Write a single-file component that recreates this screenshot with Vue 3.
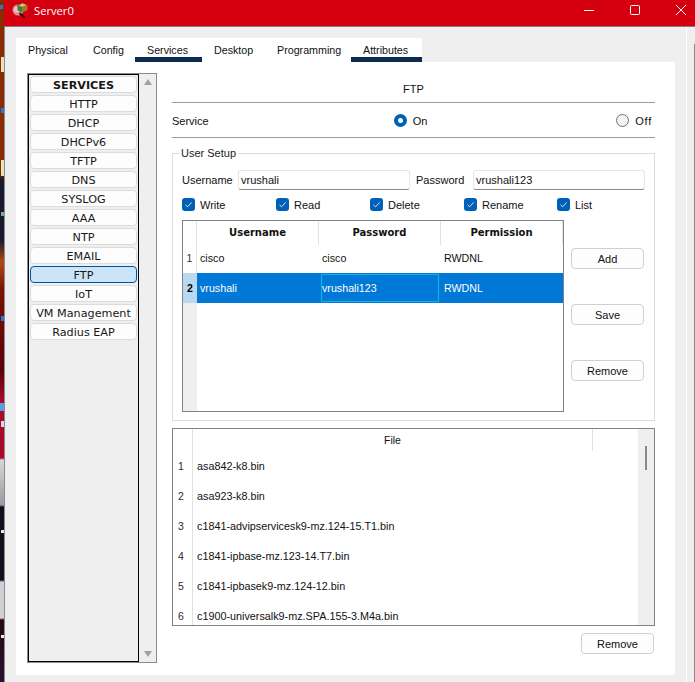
<script setup>
const tabs = ['Physical', 'Config', 'Services', 'Desktop', 'Programming', 'Attributes']
const underlined = ['Services', 'Attributes']

const services = ['HTTP', 'DHCP', 'DHCPv6', 'TFTP', 'DNS', 'SYSLOG', 'AAA', 'NTP', 'EMAIL', 'FTP', 'IoT', 'VM Management', 'Radius EAP']

const perms = ['Write', 'Read', 'Delete', 'Rename', 'List']

const users = [
  { name: 'cisco', pass: 'cisco', perm: 'RWDNL' },
  { name: 'vrushali', pass: 'vrushali123', perm: 'RWDNL', selected: true },
]

const files = [
  'asa842-k8.bin',
  'asa923-k8.bin',
  'c1841-advipservicesk9-mz.124-15.T1.bin',
  'c1841-ipbase-mz.123-14.T7.bin',
  'c1841-ipbasek9-mz.124-12.bin',
  'c1900-universalk9-mz.SPA.155-3.M4a.bin',
]
</script>

<template>
  <div class="screen">
    <div class="wallpaper"></div>
    <div class="window">
      <!-- title bar -->
      <header class="titlebar">
        <svg class="app-icon" width="18" height="18" viewBox="0 0 18 18">
          <circle cx="6" cy="8" r="5.5" fill="#e58a94" />
          <circle cx="5" cy="7.5" r="3" fill="#f2c0c4" />
          <path d="M7.5 11 L12.5 15.5" stroke="#1c0c0c" stroke-width="1.7" fill="none" />
          <path d="M5.5 3.5 L10.5 1 L15.5 3 L10.5 5.5 Z" fill="#e0bc70" stroke="#5a3a10" stroke-width=".6" />
          <path d="M5.5 3.5 L10.5 5.5 L10.5 10.5 L5.5 8.5 Z" fill="#2f8a30" />
          <path d="M10.5 5.5 L15.5 3 L15.5 8 L10.5 10.5 Z" fill="#a8762c" />
        </svg>
        <span class="title">Server0</span>
        <div class="controls">
          <svg width="12" height="12" viewBox="0 0 12 12"><path d="M1 6.5H11" stroke="#fff" fill="none" /></svg>
          <svg width="12" height="12" viewBox="0 0 12 12"><rect x="1.5" y="1.5" width="9" height="9" rx="1" stroke="#fff" fill="none" /></svg>
          <svg width="12" height="12" viewBox="0 0 12 12"><path d="M1 1L11 11M11 1L1 11" stroke="#fff" fill="none" /></svg>
        </div>
      </header>

      <div class="client">
        <div class="sheet">
          <nav class="tabs">
            <div
              v-for="t in tabs"
              :key="t"
              class="tab"
              :class="{ underlined: underlined.includes(t) }"
            >{{ t }}</div>
          </nav>

          <div class="panel">
            <!-- services list -->
            <aside class="services">
              <div class="service-list">
                <div class="service-btn head">SERVICES</div>
                <div
                  v-for="s in services"
                  :key="s"
                  class="service-btn"
                  :class="{ active: s === 'FTP' }"
                >{{ s }}</div>
              </div>
              <div class="service-scroll">
                <span class="arrow up"></span>
                <span class="arrow down"></span>
              </div>
            </aside>

            <section class="content">
              <div class="heading">FTP</div>
              <div class="service-row">
                <span>Service</span>
                <label class="radio-wrap on"><span class="radio checked"></span>On</label>
                <label class="radio-wrap off"><span class="radio"></span>Off</label>
              </div>

              <fieldset class="setup">
                <legend>User Setup</legend>

                <div class="creds">
                  <span>Username</span>
                  <input class="field" type="text" value="vrushali" readonly />
                  <span class="pw-label">Password</span>
                  <input class="field" type="text" value="vrushali123" readonly />
                </div>

                <div class="perms">
                  <label v-for="p in perms" :key="p" class="perm">
                    <span class="check">
                      <svg width="9" height="9" viewBox="0 0 9 9"><path d="M1.5 4.8L3.6 6.8L7.6 2.4" stroke="#cfe4f7" stroke-width="1" fill="none" /></svg>
                    </span>
                    {{ p }}
                  </label>
                </div>

                <div class="users-area">
                  <div class="users-table">
                    <div class="u-row u-head">
                      <div class="gut"></div>
                      <div class="hcell">Username</div>
                      <div class="hcell">Password</div>
                      <div class="hcell">Permission</div>
                    </div>
                    <div
                      v-for="(u, i) in users"
                      :key="u.name"
                      class="u-row u-body"
                      :class="{ selected: u.selected }"
                    >
                      <div class="gut num">{{ i + 1 }}</div>
                      <div class="cell">{{ u.name }}</div>
                      <div class="cell pass">{{ u.pass }}</div>
                      <div class="cell">{{ u.perm }}</div>
                    </div>
                    <div class="u-fill"><div class="gut"></div></div>
                  </div>
                  <div class="user-actions">
                    <button class="btn">Add</button>
                    <button class="btn">Save</button>
                    <button class="btn">Remove</button>
                  </div>
                </div>
              </fieldset>

              <div class="files">
                <div class="files-main">
                  <div class="f-head">
                    <div class="f-gut"></div>
                    <div class="f-title">File</div>
                  </div>
                  <div v-for="(f, i) in files" :key="f" class="f-row">
                    <div class="f-gut f-num">{{ i + 1 }}</div>
                    <div class="f-name">{{ f }}</div>
                  </div>
                </div>
                <div class="files-scroll"><span class="thumb"></span></div>
              </div>

              <div class="bottom">
                <button class="btn">Remove</button>
              </div>
            </section>
          </div>
        </div>

        <div class="edge"></div>
      </div>
    </div>
  </div>
</template>

<style>
html, body {
  margin: 0;
  background: #efefef;
}
</style>

<style scoped>
.screen {
  display: flex;
  width: 695px;
  height: 682px;
  overflow: hidden;
  font-family: "Liberation Sans", Arial, sans-serif;
  font-size: 11px;
  color: #111;
}

/* sliver of desktop wallpaper left of the window, with cut-off desktop icons */
.wallpaper {
  width: 4px;
  flex: none;
  background-repeat: no-repeat;
  background-image:
    linear-gradient(#2a78d0, #2a78d0),
    linear-gradient(#e8e4b8, #e8e4b8),
    linear-gradient(#2a78d0, #2a78d0),
    linear-gradient(#e8e4b8, #e8e4b8),
    linear-gradient(#7ab090, #7ab090),
    linear-gradient(#2a78d0, #2a78d0),
    linear-gradient(#5aa0e0, #5aa0e0),
    linear-gradient(#d8d8e8, #d8d8e8),
    linear-gradient(#e8e8e8, #e8e8e8),
    linear-gradient(#e8e8e8, #e8e8e8),
    linear-gradient(
      180deg,
      #8a2c02 0,
      #8a2c02 172px,
      #1a1a2c 180px,
      #1a1a2c 240px,
      #b04a12 262px,
      #7a1200 290px,
      #5c0008 370px,
      #a80a2a 400px,
      #a80a2a 458px,
      #d8d8d8 460px,
      #9a9a9a 505px,
      #10101c 507px,
      #10101c 580px,
      #d0d0d0 582px,
      #d0d0d0 618px,
      #2a0810 620px,
      #2a1030 682px
    );
  background-size:
    3px 4px, 3px 15px, 3px 5px, 3px 16px, 3px 4px, 3px 5px, 4px 8px, 3px 6px, 3px 3px, 3px 3px, 100% 100%;
  background-position:
    0 5px, 1px 57px, 1px 108px, 1px 160px, 1px 212px, 1px 316px, 0 403px, 1px 421px, 1px 530px, 1px 635px, 0 0;
}

.window {
  flex: 1;
  min-width: 0;
  display: flex;
  flex-direction: column;
}

/* title bar */
.titlebar {
  height: 26px;
  flex: none;
  display: flex;
  align-items: center;
  background: #d4000f;
  border-bottom: 1px solid #8a7a8c;
  padding-left: 8px;
  color: #fff;
}

.app-icon {
  margin-top: -4px;
  flex: none;
}

.title {
  margin-left: 4px;
  margin-top: -6px;
  font-family: "Open Sans", sans-serif;
  font-size: 11.2px;
}

.controls {
  margin-left: auto;
  margin-top: -6px;
  display: flex;
  gap: 34px;
  padding-right: 8px;
}

/* client area */
.client {
  flex: 1;
  display: flex;
  background: #efefef;
  border-left: 1px solid #8a8a98;
  padding: 11px 0 7px 11px;
  min-height: 0;
}

.sheet {
  width: 659px;
  flex: none;
  display: flex;
  flex-direction: column;
}

.edge {
  width: 8px;
  margin-left: 11px;
  margin-top: -11px;
  margin-bottom: -7px;
  border-left: 1px solid #fff;
  position: relative;
}

.edge::after {
  content: '';
  position: absolute;
  right: 0;
  top: 17px;
  bottom: 0;
  width: 1px;
  background: #8a8a8a;
}

/* tabs */
.tabs {
  display: grid;
  grid-template-columns: 65px 54px 67px 63px 86px 71px;
  width: 406px;
  height: 24px;
  background: #fff;
}

.tab {
  padding: 6px 0 0 12px;
  box-sizing: border-box;
  height: 24px;
  font-size: 10.7px;
  line-height: 13px;
}

.tab.underlined {
  border-bottom: 5px solid #0c2a50;
}

.panel {
  flex: 1;
  display: flex;
  gap: 15px;
  background: #fff;
  padding: 11px 20px 12px 11px;
  min-height: 0;
}

/* services */
.services {
  width: 130px;
  flex: none;
  display: flex;
  box-sizing: border-box;
  border: 1px solid #8a8a90;
  background: #efefef;
}

.service-list {
  width: 111px;
  flex: none;
  box-sizing: border-box;
  border: 1px solid #000;
  padding: 1px;
  display: flex;
  flex-direction: column;
  gap: 2px;
  font-family: "DejaVu Sans", sans-serif;
  font-size: 11.2px;
}

.service-btn {
  height: 17px;
  box-sizing: border-box;
  border: 1px solid #dcdcdc;
  border-radius: 4px;
  background: #fdfdfd;
  text-align: center;
  line-height: 17px;
  color: #181818;
}

.service-btn.head {
  font-weight: 700;
  font-size: 11.2px;
}

.service-btn.active {
  background: #cce4f7;
  border-color: #005499;
}

.service-scroll {
  flex: 1;
  display: flex;
  flex-direction: column;
  justify-content: space-between;
  align-items: center;
  padding: 5px 0;
}

.arrow {
  width: 0;
  height: 0;
  border-left: 4px solid transparent;
  border-right: 4px solid transparent;
}

.arrow.up {
  border-bottom: 6px solid #a2a2a2;
}

.arrow.down {
  border-top: 6px solid #a2a2a2;
}

/* right column */
.content {
  flex: 1;
  min-width: 0;
  display: flex;
  flex-direction: column;
}

.heading {
  height: 19px;
  text-align: center;
  padding-top: 10px;
  line-height: 13px;
  border-bottom: 1px solid #9a9a9a;
}

.service-row {
  display: flex;
  align-items: center;
  height: 33px;
  padding-top: 1px;
  border-bottom: 1px solid #9a9a9a;
}

.radio-wrap {
  display: flex;
  align-items: center;
  gap: 6px;
}

.radio-wrap.on {
  margin-left: 185px;
}

.radio-wrap.off {
  margin-left: auto;
  margin-right: 3px;
  letter-spacing: .8px;
}

.radio {
  width: 13px;
  height: 13px;
  box-sizing: border-box;
  border-radius: 50%;
  border: 1px solid #707070;
  background: #f4f4f4;
}

.radio.checked {
  border: 4px solid #0060b8;
  background: #fff;
}

.setup {
  margin: 9px 0 0;
  padding: 10px 9px 0;
  height: 274px;
  box-sizing: border-box;
  border: 1px solid #dcdcdc;
  min-width: 0;
}

.setup legend {
  margin-left: -3px;
  padding: 0 2px;
  line-height: 13px;
  color: #222;
}

.creds {
  display: grid;
  grid-template-columns: 56px 172px 63px 172px;
  align-items: center;
  height: 20px;
}

.pw-label {
  padding-left: 6px;
}

.field {
  height: 20px;
  width: 100%;
  box-sizing: border-box;
  border: 1px solid #e6e6e6;
  border-bottom-color: #8a8a8a;
  border-radius: 3px;
  background: #fff;
  padding: 0 2px;
  font: inherit;
  color: #111;
  outline: none;
}

.perms {
  display: grid;
  grid-template-columns: 94px 94px 94px 93px 94px;
  margin-top: 8px;
  height: 13px;
}

.perm {
  display: flex;
  align-items: center;
  gap: 5px;
}

.check {
  width: 13px;
  height: 13px;
  border-radius: 3px;
  background: #0060b8;
  display: flex;
  align-items: center;
  justify-content: center;
}

.users-area {
  display: flex;
  gap: 7px;
  margin-top: 9px;
}

.users-table {
  width: 382px;
  height: 192px;
  flex: none;
  box-sizing: border-box;
  border: 1px solid #82828c;
  display: flex;
  flex-direction: column;
  background: #fff;
}

.u-row {
  display: grid;
  grid-template-columns: 14px 122px 122px 1fr;
}

.u-head {
  height: 22px;
}

.hcell {
  font-family: "DejaVu Sans", sans-serif;
  font-weight: 700;
  font-size: 10px;
  text-align: center;
  line-height: 24px;
  border-right: 1px solid #e2e2e2;
}

.gut {
  border-right: 1px solid #e2e2e2;
}

.u-body {
  height: 30px;
  line-height: 30px;
}

.num {
  text-align: center;
  font-size: 10.5px;
  color: #333;
}

.cell {
  padding-left: 3px;
  font-size: 10.7px;
}

.u-body.selected {
  background: #0078d7;
  color: #fff;
}

.selected .num {
  background: #b9d9f2;
  color: #000;
  font-weight: 700;
  border-right: 0;
}

.selected .pass {
  border: 1px solid #12b4e6;
  line-height: 26px;
  padding-left: 0;
  margin: 1px 2px;
}

.u-fill {
  flex: 1;
  display: flex;
}

.u-fill .gut {
  width: 14px;
  background: #efefef;
  border: 0;
}

.user-actions {
  margin-top: 28px;
  display: flex;
  flex-direction: column;
  gap: 35px;
}

.btn {
  width: 73px;
  height: 21px;
  padding: 0;
  border: 1px solid #d0d0d0;
  border-radius: 4px;
  background: #fdfdfd;
  font: inherit;
  color: #111;
}

/* files table */
.files {
  margin-top: 7px;
  height: 196px;
  display: flex;
  border: 1px solid #82828c;
  overflow: hidden;
}

.files-main {
  flex: 1;
  min-width: 0;
}

.f-head {
  display: flex;
  height: 22px;
  line-height: 22px;
  font-size: 10.5px;
}

.f-gut {
  width: 19px;
  flex: none;
  border-right: 1px solid #e2e2e2;
}

.f-title {
  width: 399px;
  text-align: center;
  border-right: 1px solid #e2e2e2;
}

.f-row {
  display: flex;
  height: 30px;
  line-height: 30px;
  font-size: 10.8px;
}

.f-num {
  box-sizing: border-box;
  width: 20px;
  padding-left: 5px;
  font-size: 10.5px;
  color: #3a1a40;
}

.f-name {
  padding-left: 4px;
}

.files-scroll {
  width: 16px;
  flex: none;
  background: #efefef;
  position: relative;
}

.thumb {
  position: absolute;
  left: 7px;
  top: 17px;
  width: 2px;
  height: 24px;
  background: #8a8a8a;
}

.bottom {
  display: flex;
  justify-content: flex-end;
  margin-top: 7px;
  padding-right: 1px;
}
</style>
